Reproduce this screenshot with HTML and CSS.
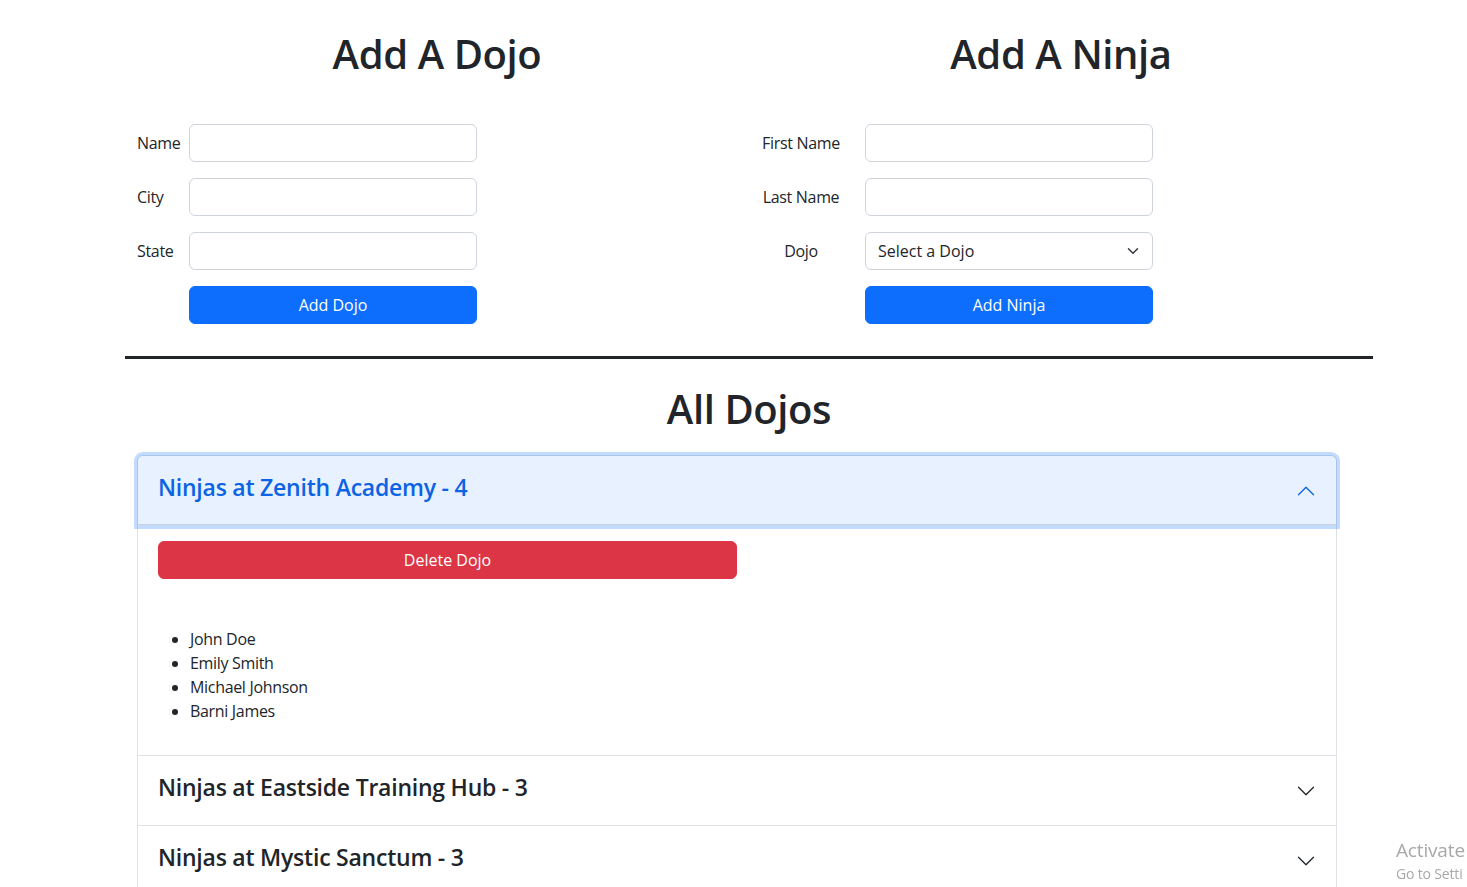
FILE: index.html
```html
<!DOCTYPE html>
<html lang="en">
<head>
<meta charset="utf-8">
<title>Dojos</title>
<link rel="stylesheet" href="styles.css">
</head>
<body>
<div class="page">
  <div class="top">
    <section class="panel">
      <h1 class="title">Add A Dojo</h1>
      <form class="form form-left">
        <label class="lbl">Name</label><input class="control" type="text">
        <label class="lbl">City</label><input class="control" type="text">
        <label class="lbl">State</label><input class="control" type="text">
        <span></span><button type="button" class="btn btn-primary">Add Dojo</button>
      </form>
    </section>
    <section class="panel">
      <h1 class="title">Add A Ninja</h1>
      <form class="form form-right">
        <label class="lbl">First Name</label><input class="control" type="text">
        <label class="lbl">Last Name</label><input class="control" type="text">
        <label class="lbl">Dojo</label>
        <div class="select-wrap">
          <select class="control select"><option>Select a Dojo</option></select>
          <svg class="select-arrow" viewBox="0 0 16 16" width="16" height="12"><path fill="none" stroke="#343a40" stroke-linecap="round" stroke-linejoin="round" stroke-width="2" d="m2 5 6 6 6-6"/></svg>
        </div>
        <span></span><button type="button" class="btn btn-primary">Add Ninja</button>
      </form>
    </section>
  </div>
  <hr class="divider">
  <h1 class="title title-all">All Dojos</h1>
  <div class="accordion">
    <div class="acc-item">
      <button type="button" class="acc-btn is-open">
        <span class="acc-title">Ninjas at Zenith Academy - 4</span>
        <svg class="chev chev-up" viewBox="0 0 16 16" width="20" height="20"><path fill="#0c63e4" fill-rule="evenodd" d="M1.646 4.646a.5.5 0 0 1 .708 0L8 10.293l5.646-5.647a.5.5 0 0 1 .708.708l-6 6a.5.5 0 0 1-.708 0l-6-6a.5.5 0 0 1 0-.708z"/></svg>
      </button>
      <div class="acc-body">
        <div class="delete-row"><button type="button" class="btn btn-danger">Delete Dojo</button></div>
        <ul class="ninjas">
          <li>John Doe</li>
          <li>Emily Smith</li>
          <li>Michael Johnson</li>
          <li>Barni James</li>
        </ul>
      </div>
    </div>
    <div class="acc-item">
      <button type="button" class="acc-btn">
        <span class="acc-title">Ninjas at Eastside Training Hub - 3</span>
        <svg class="chev" viewBox="0 0 16 16" width="20" height="20"><path fill="#212529" fill-rule="evenodd" d="M1.646 4.646a.5.5 0 0 1 .708 0L8 10.293l5.646-5.647a.5.5 0 0 1 .708.708l-6 6a.5.5 0 0 1-.708 0l-6-6a.5.5 0 0 1 0-.708z"/></svg>
      </button>
    </div>
    <div class="acc-item">
      <button type="button" class="acc-btn">
        <span class="acc-title">Ninjas at Mystic Sanctum - 3</span>
        <svg class="chev" viewBox="0 0 16 16" width="20" height="20"><path fill="#212529" fill-rule="evenodd" d="M1.646 4.646a.5.5 0 0 1 .708 0L8 10.293l5.646-5.647a.5.5 0 0 1 .708.708l-6 6a.5.5 0 0 1-.708 0l-6-6a.5.5 0 0 1 0-.708z"/></svg>
      </button>
    </div>
  </div>
</div>
<div class="watermark">
  <div class="wm-big">Activate</div>
  <div class="wm-small">Go to Setti</div>
</div>
</body>
</html>
```
FILE: styles.css
```css
html { overflow: hidden; }
* { box-sizing: border-box; }
body {
  margin: 0;
  font-family: "Open Sans", "Noto Sans", sans-serif;
  font-size: 16px;
  line-height: 1.5;
  color: #212529;
  background: #fff;
  letter-spacing: -0.02em;
}
.page {
  width: 1248px;
  margin-left: 125px;
  padding-top: 30px;
}
.top {
  display: grid;
  grid-template-columns: 624px 624px;
}
.title {
  margin: 0 0 46px;
  font-size: 40px;
  font-weight: 600;
  line-height: 48px;
  text-align: center;
  letter-spacing: -0.01em;
}
.form {
  display: grid;
  grid-auto-rows: 38px;
  row-gap: 16px;
  align-items: center;
}
.form-left {
  grid-template-columns: 52px 288px;
  padding-left: 12px;
}
.form-right {
  grid-template-columns: 96px 288px;
  column-gap: 16px;
  padding-left: 4px;
}
.form-right .lbl { text-align: center; }
.lbl { font-size: 16px; }
.control {
  display: block;
  width: 288px;
  height: 38px;
  padding: 6px 12px;
  font: inherit;
  color: #212529;
  background: #fff;
  border: 1px solid #ced4da;
  border-radius: 6px;
  outline: none;
}
.select-wrap { position: relative; width: 288px; height: 38px; }
.select {
  appearance: none;
  -webkit-appearance: none;
  padding-right: 36px;
}
.select-arrow {
  position: absolute;
  right: 12px;
  top: 13px;
  pointer-events: none;
}
.btn {
  display: block;
  height: 38px;
  padding: 6px 12px;
  font: inherit;
  line-height: 24px;
  color: #fff;
  border: 1px solid transparent;
  border-radius: 6px;
  text-align: center;
  cursor: pointer;
}
.btn-primary { width: 288px; background: #0d6efd; border-color: #0d6efd; }
.btn-danger { width: 579px; background: #dc3545; border-color: #dc3545; }
.divider {
  margin: 32px 0 0;
  height: 3px;
  border: 0;
  background: #212529;
  opacity: 1;
}
.title-all { margin: 26px 0 22px; }
.accordion {
  margin-left: 12px;
  width: 1200px;
}
.acc-item {
  border: 1px solid #dee2e6;
  background: #fff;
}
.acc-item + .acc-item { border-top: 0; }
.acc-item:first-child { border-radius: 6px 6px 0 0; }
.acc-item:last-child { border-radius: 0 0 6px 6px; }
.acc-btn {
  position: relative;
  display: flex;
  align-items: center;
  width: 100%;
  padding: 16px 20px;
  font: inherit;
  color: #212529;
  text-align: left;
  background: #fff;
  border: 0;
  border-radius: 0;
  cursor: pointer;
}
.acc-btn.is-open {
  z-index: 3;
  color: #0c63e4;
  background: #e7f1ff;
  border-radius: 5px 5px 0 0;
  box-shadow: inset 0 -1px 0 rgba(0,0,0,.125), 0 0 0 4px rgba(13,110,253,.25);
}
.acc-title {
  display: block;
  margin: 1px 0 7px;
  font-size: 23px;
  font-weight: 600;
  line-height: 29px;
  letter-spacing: -0.01em;
}
.chev {
  flex-shrink: 0;
  margin-left: auto;
}
.chev-up { transform: rotate(-180deg); }
.acc-body { padding: 16px 20px; }
.delete-row { margin-bottom: 48px; }
.ninjas {
  margin: 0 0 16px;
  padding-left: 32px;
}
.ninjas li { line-height: 24px; }
.watermark {
  position: fixed;
  left: 1396px;
  top: 837px;
  white-space: nowrap;
  color: #a8a8a8;
  letter-spacing: -0.01em;
  pointer-events: none;
}
.wm-big { font-size: 19px; line-height: 27px; }
.wm-small { font-size: 14px; line-height: 19px; }
```
